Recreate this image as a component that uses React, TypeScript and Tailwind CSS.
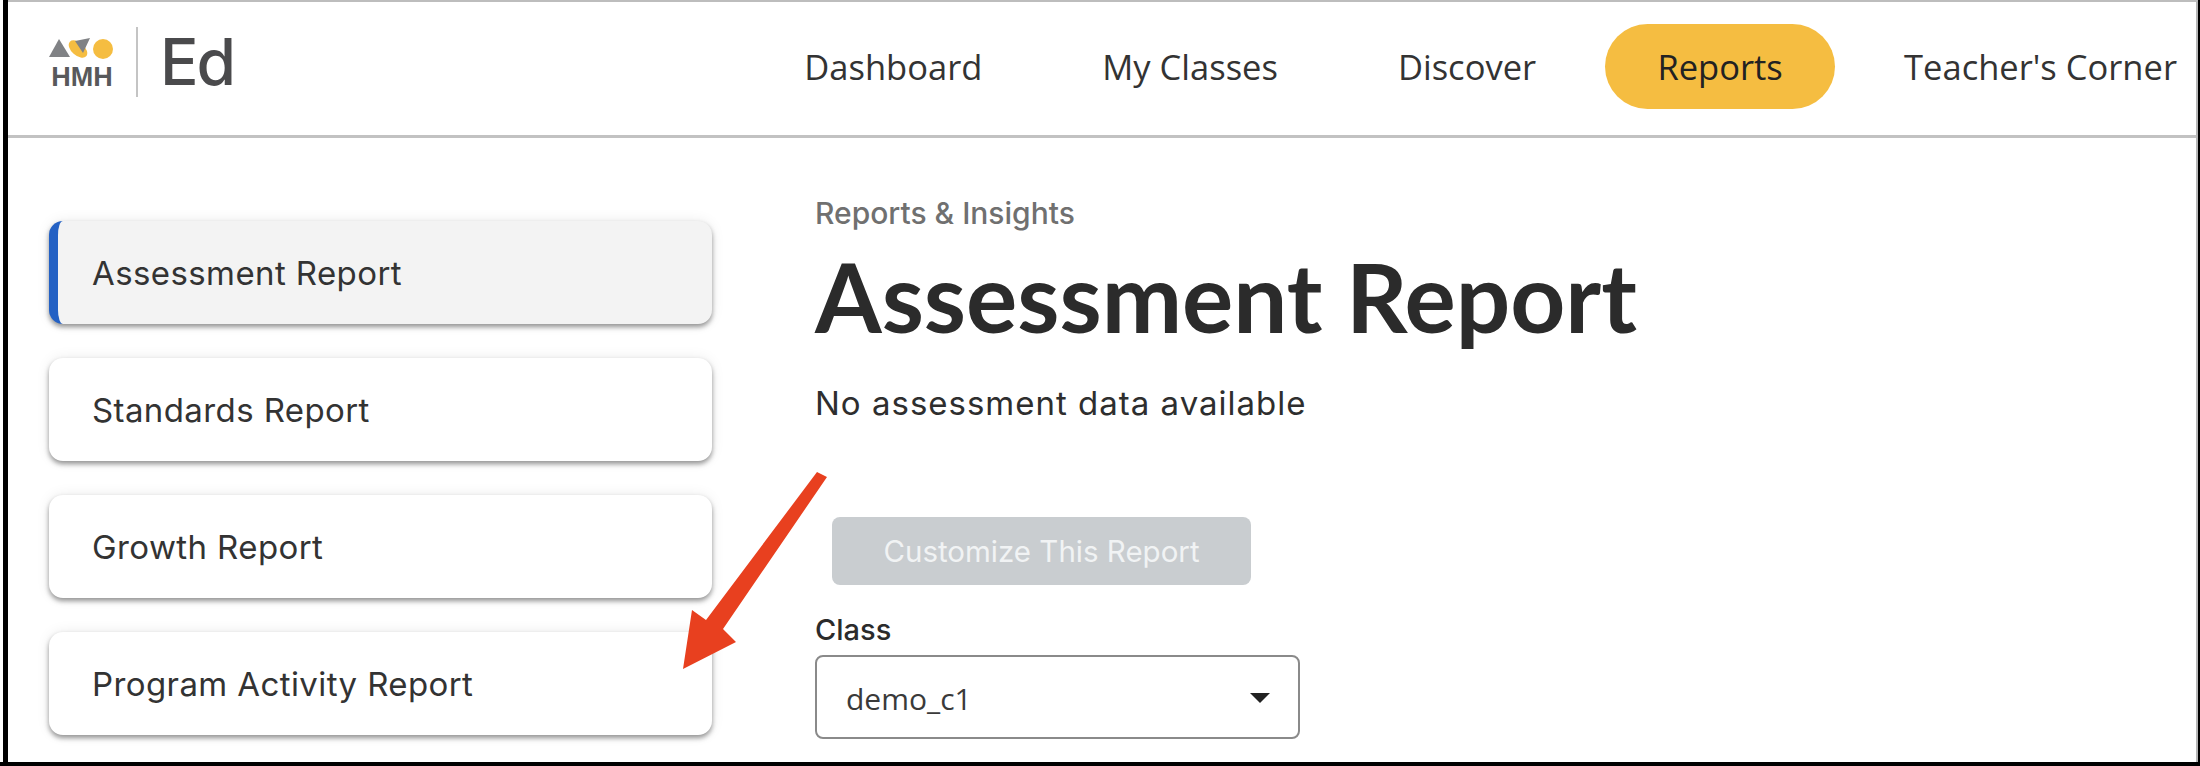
import React from "react";

const navLinks = ["Dashboard", "My Classes", "Discover"];
const reports = ["Assessment Report", "Standards Report", "Growth Report", "Program Activity Report"];

function Logo() {
  return (
    <div className="mb-[13px] flex items-center">
      <div className="mt-[6px] flex w-[66px] flex-col items-center">
        <svg width="66" height="24" viewBox="0 0 66 24">
          <polygon points="0,20 10,2 21,20" fill="#808285" />
          <ellipse cx="29" cy="12" rx="11" ry="6.5" transform="rotate(42 29 12)" fill="#f5bd41" />
          <polygon points="26,4 41,1 34,16" fill="#808285" />
          <circle cx="54" cy="12" r="10" fill="#f5bd41" />
        </svg>
        <span className="font-['Liberation_Sans',sans-serif] text-[27px] leading-[32px] font-bold text-[#58595b]">
          HMH
        </span>
      </div>
      <div className="ml-[21px] h-[70px] w-[2px] bg-[#c4c4c4]" />
      <span className="ml-[22px] font-['Inter',sans-serif] text-[64px] leading-none font-medium tracking-[-2px] text-[#4a4a4c]">
        Ed
      </span>
    </div>
  );
}

function Header() {
  return (
    <header className="flex h-[136px] items-center justify-between border-b-[3px] border-[#c2c2c2] pr-[19px] pl-[41px]">
      <Logo />
      <nav className="mb-[4px] flex items-center gap-[69px] font-['Open_Sans',sans-serif] text-[34.5px] text-[#333]">
        <div className="flex gap-[120px]">
          {navLinks.map((item) => (
            <span key={item}>{item}</span>
          ))}
        </div>
        <span className="flex h-[85px] w-[230px] items-center justify-center rounded-full bg-[#f5bd41] text-[#222]">
          Reports
        </span>
        <span>Teacher's Corner</span>
      </nav>
    </header>
  );
}

function Sidebar() {
  return (
    <aside className="flex w-[663px] flex-col gap-[34px]">
      {reports.map((name, i) => (
        <div
          key={name}
          className={`flex h-[103px] items-center rounded-[14px] pt-[2px] text-[33px] tracking-[0.4px] text-[#333] shadow-[0_3px_5px_rgba(0,0,0,0.4),0_0_14px_rgba(0,0,0,0.08)] ${
            i === 0 ? "border-l-[9px] border-[#2461c4] bg-[#f3f3f3] pl-[34px]" : "bg-white pl-[43px]"
          }`}
        >
          {name}
        </div>
      ))}
    </aside>
  );
}

function Content() {
  return (
    <section className="-mt-[26px] ml-[103px] flex flex-col">
      <p className="text-[30px] leading-[36px] font-medium text-[#707070]">Reports &amp; Insights</p>
      <h1 className="mt-[10px] font-['Lato',sans-serif] text-[96px] leading-[110px] font-bold text-[#2b2b2b]">
        Assessment Report
      </h1>
      <p className="mt-[32px] text-[33px] leading-[40px] tracking-[1px] text-[#2e2e2e]">
        No assessment data available
      </p>
      <button className="mt-[94px] ml-[17px] h-[68px] w-[419px] rounded-[8px] bg-[#c9cdd0] text-[29.5px] text-[#f1f3f4]">
        Customize This Report
      </button>
      <label className="mt-[27px] text-[29px] leading-[36px] font-medium text-[#2b2b2b]">Class</label>
      <div className="mt-[7px] flex h-[84px] w-[485px] items-center justify-between rounded-[8px] border-2 border-[#8a8a8a] pt-[2px] pr-[28px] pl-[29px] font-['Open_Sans',sans-serif] text-[30px] text-[#3a3a3a]">
        demo_c1
        <span className="h-0 w-0 border-x-[10px] border-t-[10px] border-x-transparent border-t-[#222]" />
      </div>
    </section>
  );
}

function Arrow() {
  return (
    <svg className="absolute top-[465px] left-[675px]" width="160" height="212" viewBox="675 465 160 212">
      <polygon points="817,472 827,477 723,629 736,642 683,669 692,610 706,620" fill="#e8401f" />
    </svg>
  );
}

export default function App() {
  return (
    <div className="relative h-[766px] w-[2200px] overflow-hidden bg-white font-['Inter',sans-serif]">
      <div className="ml-[3px] h-[762px] border-r-2 border-l-[5px] border-r-black border-l-black">
        <div className="h-full border-t-2 border-r-2 border-t-[#bdbdbd] border-r-[#b5b5b5]">
          <Header />
          <main className="flex pt-[83px] pl-[41px]">
            <Sidebar />
            <Content />
          </main>
        </div>
      </div>
      <div className="absolute right-0 bottom-0 left-0 h-[4px] bg-black" />
      <Arrow />
    </div>
  );
}
